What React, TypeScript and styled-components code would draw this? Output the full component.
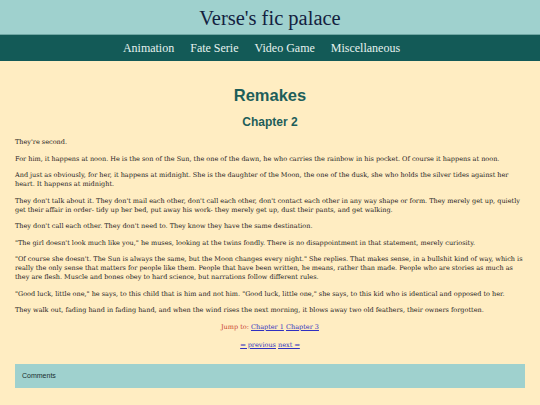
import styled, { createGlobalStyle } from 'styled-components';

const GlobalStyle = createGlobalStyle`
  body {
    margin: 0;
    background: #ffedc2;
    font-family: 'DejaVu Serif', Georgia, serif;
  }
`;

const Header = styled.header`
  background: #9fd1ce;
  height: 34px;
  border-bottom: 1px solid #6fa7a4;
  display: flex;
  align-items: center;
  justify-content: center;
`;

const SiteTitle = styled.h1`
  margin: 0;
  font-family: 'Liberation Serif', 'Times New Roman', serif;
  font-weight: normal;
  font-size: 20.5px;
  color: #13213f;
  padding-top: 2px;
`;

const Nav = styled.nav`
  background: #135a57;
  height: 26px;
  padding-right: 17px;
  display: flex;
  align-items: center;
  justify-content: center;
  gap: 16px;
`;

const NavLink = styled.a`
  color: #e6f2ef;
  font-family: 'Liberation Serif', 'Times New Roman', serif;
  font-size: 12px;
  text-decoration: none;
`;

const Main = styled.main`
  padding: 0 15px;
`;

const Title = styled.h2`
  margin: 24px 0 0;
  font-family: 'Liberation Sans', Arial, sans-serif;
  font-size: 16.5px;
  font-weight: bold;
  color: #1d5e5a;
  text-align: center;
  line-height: 20px;
`;

const Chapter = styled.h3`
  margin: 10px 0 9px;
  font-family: 'Liberation Sans', Arial, sans-serif;
  font-size: 12px;
  font-weight: bold;
  color: #1d5e5a;
  text-align: center;
  line-height: 14px;
`;

const Para = styled.p`
  margin: 0 0 7.5px;
  font-size: 6.5px;
  line-height: 9px;
  color: #23201d;
`;

const Centered = styled.p<{ $gap?: number }>`
  margin: 0 0 ${p => p.$gap ?? 9}px;
  text-align: center;
  font-size: 6.5px;
  line-height: 9px;
  color: #c8402f;
`;

const Link = styled.a`
  color: #3030c0;
  text-decoration: underline;
`;

const Comments = styled.div`
  margin-top: 14px;
  background: #9fd1ce;
  height: 24px;
  padding: 0 7px;
  display: flex;
  align-items: center;
  font-family: 'Liberation Sans', Arial, sans-serif;
  font-size: 7px;
  color: #1a2e30;
`;

const paragraphs = [
  "They're second.",
  'For him, it happens at noon. He is the son of the Sun, the one of the dawn, he who carries the rainbow in his pocket. Of course it happens at noon.',
  'And just as obviously, for her, it happens at midnight. She is the daughter of the Moon, the one of the dusk, she who holds the silver tides against her heart. It happens at midnight.',
  "They don't talk about it. They don't mail each other, don't call each other, don't contact each other in any way shape or form. They merely get up, quietly get their affair in order- tidy up her bed, put away his work- they merely get up, dust their pants, and get walking.",
  "They don't call each other. They don't need to. They know they have the same destination.",
  '"The girl doesn\'t look much like you," he muses, looking at the twins fondly. There is no disappointment in that statement, merely curiosity.',
  '"Of course she doesn\'t. The Sun is always the same, but the Moon changes every night." She replies. That makes sense, in a bullshit kind of way, which is really the only sense that matters for people like them. People that have been written, he means, rather than made. People who are stories as much as they are flesh. Muscle and bones obey to hard science, but narrations follow different rules.',
  '"Good luck, little one," he says, to this child that is him and not him. "Good luck, little one," she says, to this kid who is identical and opposed to her.',
  'They walk out, fading hand in fading hand, and when the wind rises the next morning, it blows away two old feathers, their owners forgotten.',
];

export default function App() {
  return (
    <>
      <GlobalStyle />
      <Header>
        <SiteTitle>Verse's fic palace</SiteTitle>
      </Header>
      <Nav>
        <NavLink href="#">Animation</NavLink>
        <NavLink href="#">Fate Serie</NavLink>
        <NavLink href="#">Video Game</NavLink>
        <NavLink href="#">Miscellaneous</NavLink>
      </Nav>
      <Main>
        <Title>Remakes</Title>
        <Chapter>Chapter 2</Chapter>
        {paragraphs.map((text, i) => (
          <Para key={i}>{text}</Para>
        ))}
        <Centered>
          Jump to: <Link href="#">Chapter 1</Link> <Link href="#">Chapter 3</Link>
        </Centered>
        <Centered $gap={0}>
          <Link href="#">⇐ previous</Link> <Link href="#">next ⇒</Link>
        </Centered>
        <Comments>Comments</Comments>
      </Main>
    </>
  );
}
